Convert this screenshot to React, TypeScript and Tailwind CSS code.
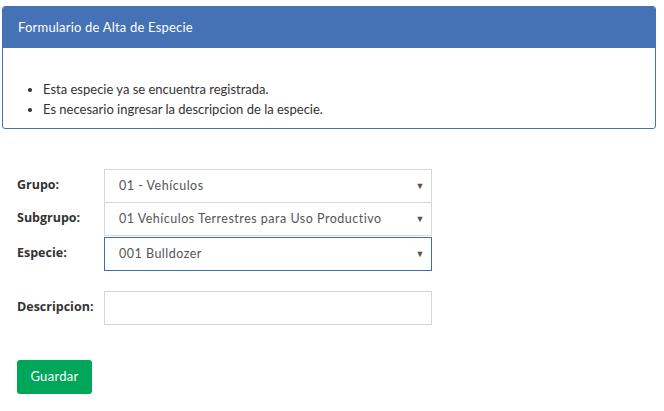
import React from "react";

function Select({ value, focused }: { value: string; focused?: boolean }) {
  return (
    <div
      className={`flex h-[34px] w-[328px] items-center justify-between border bg-white pl-[14px] pr-[6px] text-[12.5px] tracking-[0.5px] text-[#555] ${
        focused ? "border-[#3d6fa8]" : "border-[#d2d6de]"
      }`}
      style={{ fontFamily: "'Lato', 'Liberation Sans', sans-serif" }}
    >
      <span>{value}</span>
      <span className="text-[9px] text-[#555]">▼</span>
    </div>
  );
}

function Row({ label, children, mt }: { label: string; children: React.ReactNode; mt?: string }) {
  return (
    <div className={`flex items-start ${mt ?? ""}`}>
      <div
        className="w-[87px] pt-[7px] text-[12.5px] font-bold text-[#333]"
        style={{ fontFamily: "'Open Sans', sans-serif" }}
      >
        {label}
      </div>
      {children}
    </div>
  );
}

export default function App() {
  return (
    <div className="min-h-[411px] w-[664px] bg-white" style={{ fontFamily: "'Lato', sans-serif" }}>
      <div className="px-[2px] pt-[6px] pr-[8px]">
        <div className="overflow-hidden rounded-[3px] border border-[#4472b5]">
          <div className="flex h-[41px] items-center bg-[#4472b5] pl-[15px] text-[13px] tracking-[0.2px] text-white">
            Formulario de Alta de Especie
          </div>
          <div className="pb-[9px] pt-[31px] text-[13px] leading-[20px] text-[#333]">
            <ul className="list-disc pl-[40px]">
              <li>Esta especie ya se encuentra registrada.</li>
              <li>Es necesario ingresar la descripcion de la especie.</li>
            </ul>
          </div>
        </div>
      </div>
      <div className="pl-[17px] pt-[40px]">
        <Row label="Grupo:">
          <Select value="01 - Vehículos" />
        </Row>
        <Row label="Subgrupo:" mt="mt-[-1px]">
          <Select value="01 Vehículos Terrestres para Uso Productivo" />
        </Row>
        <Row label="Especie:" mt="mt-[1px]">
          <Select value="001 Bulldozer" focused />
        </Row>
        <Row label="Descripcion:" mt="mt-[20px]">
          <div className="h-[34px] w-[328px] border border-[#d2d6de] bg-white" />
        </Row>
        <button
          className="mt-[35px] h-[34px] w-[75px] rounded-[3px] bg-[#00a65a] text-[13px] tracking-[0.3px] text-white"
          style={{ fontFamily: "'Lato', sans-serif" }}
        >
          Guardar
        </button>
      </div>
    </div>
  );
}
